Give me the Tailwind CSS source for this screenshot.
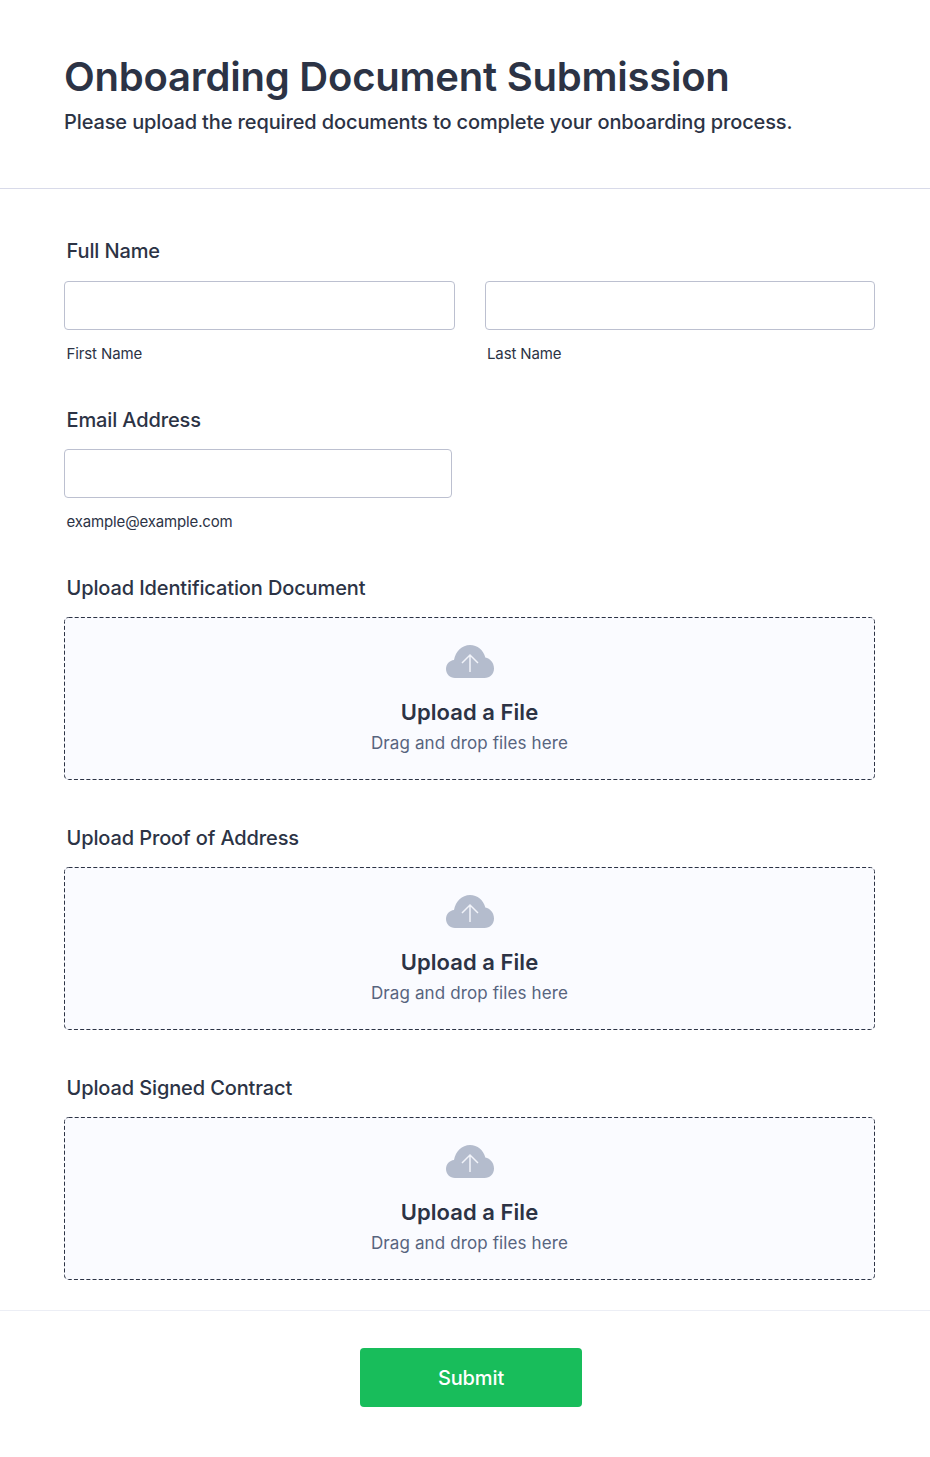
<!DOCTYPE html>
<html lang="en">
<head>
    <meta charset="UTF-8">
    <meta name="viewport" content="width=device-width, initial-scale=1.0">
    <title>Onboarding Document Submission</title>
    <script src="https://cdn.jsdelivr.net/npm/@tailwindcss/browser@4"></script>
</head>
<body class="bg-white font-['Inter',sans-serif] text-[#2c3345]">

    <header class="h-[189px] border-b border-[#d8dae9] pl-[64px] pr-[64px] pt-[52px]">
        <h1 class="text-[40px] leading-[50px] font-semibold tracking-[-0.23px]">Onboarding Document Submission</h1>
        <p class="text-[20px] leading-[26px] font-medium tracking-[-0.12px] mt-[7px]">Please upload the required documents to complete your onboarding process.</p>
    </header>

    <form class="h-[1122px] border-b border-[#eceef5] pl-[64px] pr-[55px] pt-[49px]">
        <div class="mb-[44px]">
            <label class="block ml-[2.5px] text-[20px] leading-[26px] font-medium tracking-[-0.12px]">Full Name</label>
            <div class="grid grid-cols-2 gap-[30px] mt-[17px]">
                <div>
                    <input type="text" class="block w-full h-[49px] bg-white border border-[#bcc0d0] rounded-[4px]">
                    <span class="block ml-[2.5px] mt-[15px] text-[15px] leading-[18px] tracking-[-0.12px]">First Name</span>
                </div>
                <div>
                    <input type="text" class="block w-full h-[49px] bg-white border border-[#bcc0d0] rounded-[4px]">
                    <span class="block ml-[2.5px] mt-[15px] text-[15px] leading-[18px] tracking-[-0.12px]">Last Name</span>
                </div>
            </div>
        </div>

        <div class="mb-[44px]">
            <label class="block ml-[2.5px] text-[20px] leading-[26px] font-medium tracking-[-0.12px]">Email Address</label>
            <input type="email" class="block w-[388px] h-[49px] mt-[16px] bg-white border border-[#bcc0d0] rounded-[4px]">
            <span class="block ml-[2.5px] mt-[15px] text-[15px] leading-[18px] tracking-[-0.15px]">example@example.com</span>
        </div>

        <div class="mb-[45px]">
            <label class="block ml-[2.5px] text-[20px] leading-[26px] font-medium tracking-[-0.12px]">Upload Identification Document</label>
            <div class="relative mt-[16px] h-[163px] flex flex-col items-center bg-[#fafbff] rounded-[4px] pt-[28px]">
                <svg class="absolute inset-0 w-full h-full" viewBox="0 0 811 163"><rect x="0.5" y="0.5" width="810" height="162" rx="4" fill="none" stroke="#2c3345" stroke-dasharray="4 2.2"/></svg>
                <svg class="w-[48px] h-[33px]" viewBox="0 0 48 33"><path fill="#b4bccd" d="M9 33C4 33 0 29 0 24c0-5 3.600-8.500 8-9C9.500 6.500 16 0 24 0c7.500 0 13.500 5.200 15.300 12.500C44.200 13.500 48 18 48 23.500 48 29 44 33 38.500 33z"/><path fill="none" stroke="#f2f4fa" stroke-width="1.500" d="M24 27V10M16 18l8-8 8 8"/></svg>
                <div class="mt-[20px] text-[22px] leading-[28px] font-semibold tracking-[0.05px]">Upload a File</div>
                <div class="mt-[5px] text-[17px] leading-[24px] tracking-[0.12px] text-[#57647e]">Drag and drop files here</div>
            </div>
        </div>

        <div class="mb-[45px]">
            <label class="block ml-[2.5px] text-[20px] leading-[26px] font-medium tracking-[-0.12px]">Upload Proof of Address</label>
            <div class="relative mt-[16px] h-[163px] flex flex-col items-center bg-[#fafbff] rounded-[4px] pt-[28px]">
                <svg class="absolute inset-0 w-full h-full" viewBox="0 0 811 163"><rect x="0.5" y="0.5" width="810" height="162" rx="4" fill="none" stroke="#2c3345" stroke-dasharray="4 2.2"/></svg>
                <svg class="w-[48px] h-[33px]" viewBox="0 0 48 33"><path fill="#b4bccd" d="M9 33C4 33 0 29 0 24c0-5 3.600-8.500 8-9C9.500 6.500 16 0 24 0c7.500 0 13.500 5.200 15.300 12.500C44.200 13.500 48 18 48 23.500 48 29 44 33 38.500 33z"/><path fill="none" stroke="#f2f4fa" stroke-width="1.500" d="M24 27V10M16 18l8-8 8 8"/></svg>
                <div class="mt-[20px] text-[22px] leading-[28px] font-semibold tracking-[0.05px]">Upload a File</div>
                <div class="mt-[5px] text-[17px] leading-[24px] tracking-[0.12px] text-[#57647e]">Drag and drop files here</div>
            </div>
        </div>

        <div>
            <label class="block ml-[2.5px] text-[20px] leading-[26px] font-medium tracking-[-0.12px]">Upload Signed Contract</label>
            <div class="relative mt-[16px] h-[163px] flex flex-col items-center bg-[#fafbff] rounded-[4px] pt-[28px]">
                <svg class="absolute inset-0 w-full h-full" viewBox="0 0 811 163"><rect x="0.5" y="0.5" width="810" height="162" rx="4" fill="none" stroke="#2c3345" stroke-dasharray="4 2.2"/></svg>
                <svg class="w-[48px] h-[33px]" viewBox="0 0 48 33"><path fill="#b4bccd" d="M9 33C4 33 0 29 0 24c0-5 3.600-8.500 8-9C9.500 6.500 16 0 24 0c7.500 0 13.500 5.200 15.300 12.500C44.200 13.500 48 18 48 23.500 48 29 44 33 38.500 33z"/><path fill="none" stroke="#f2f4fa" stroke-width="1.500" d="M24 27V10M16 18l8-8 8 8"/></svg>
                <div class="mt-[20px] text-[22px] leading-[28px] font-semibold tracking-[0.05px]">Upload a File</div>
                <div class="mt-[5px] text-[17px] leading-[24px] tracking-[0.12px] text-[#57647e]">Drag and drop files here</div>
            </div>
        </div>
    </form>

    <footer class="flex justify-center pt-[37px] pb-[50px] pl-[12px]">
        <button type="button" class="w-[222px] h-[59px] bg-[#18bd5b] text-white text-[20px] font-medium tracking-[-0.12px] rounded-[4px]">Submit</button>
    </footer>

</body>
</html>
